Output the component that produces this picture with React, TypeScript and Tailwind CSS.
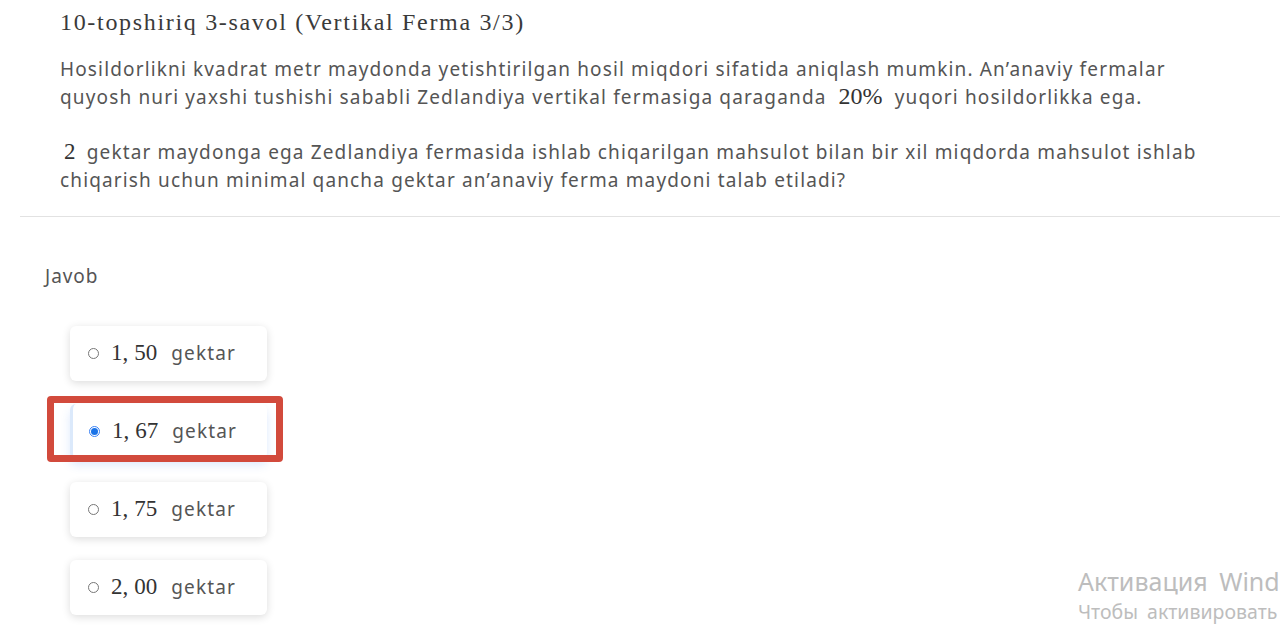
import React from "react";

const sans = "font-['Noto_Sans','Open_Sans',sans-serif]";
const serif = "font-['Liberation_Serif','DejaVu_Serif',serif]";

const OPTIONS = [
  { value: "1,50", selected: false },
  { value: "1,67", selected: true },
  { value: "1,75", selected: false },
  { value: "2,00", selected: false },
];

function Radio({ on }: { on: boolean }) {
  if (on) {
    return (
      <span className="w-[11px] h-[11px] rounded-full border border-[#3b82f6] bg-white flex items-center justify-center flex-shrink-0">
        <span className="w-[7px] h-[7px] rounded-full bg-[#1a73e8]" />
      </span>
    );
  }
  return <span className="w-[11px] h-[11px] rounded-full border border-[#777] bg-white flex-shrink-0" />;
}

function Option({ value, selected }: { value: string; selected: boolean }) {
  const [a, b] = value.split(",");
  return (
    <div className="relative">
      <div
        className={`w-[197px] h-[55px] rounded-md bg-white flex items-center gap-[12px] ${
          selected
            ? "border-l-[3px] border-[#dbe9fb] shadow-[0_6px_10px_rgba(66,133,244,0.18)] pl-[16px]"
            : "shadow-[0_2px_8px_rgba(0,0,0,0.14)] pl-[18px]"
        }`}
      >
        <Radio on={selected} />
        <span className="flex items-baseline">
          <span className={`${serif} text-[23px] text-[#333]`}>
            {a},<span className="ml-[6px]">{b}</span>
          </span>
          <span className={`${sans} text-[19px] tracking-[0.06em] text-[#555] ml-[14px]`}>gektar</span>
        </span>
      </div>
      {selected && (
        <div className="absolute left-[-23px] top-[-8px] w-[236px] h-[66px] border-[7px] border-[#d24a3c] rounded-[4px] pointer-events-none" />
      )}
    </div>
  );
}

export default function App() {
  return (
    <div className={`relative w-[1280px] h-[631px] bg-white overflow-hidden ${sans}`}>
      <div className="ml-[20px] border-b border-[#e2e2e2] pl-[40px] pt-[8px] pb-[22px]">
        <h1 className={`${serif} text-[24px] tracking-[0.07em] text-[#3a3a3a] leading-[28px]`}>
          10-topshiriq 3-savol (Vertikal Ferma 3/3)
        </h1>
        <p className="mt-[20px] text-[19px] tracking-[0.06em] leading-[27px] text-[#555] whitespace-nowrap">
          Hosildorlikni kvadrat metr maydonda yetishtirilgan hosil miqdori sifatida aniqlash mumkin. An’anaviy fermalar
          <br />
          quyosh nuri yaxshi tushishi sababli Zedlandiya vertikal fermasiga qaraganda{" "}
          <span className={`${serif} text-[24px] tracking-normal text-[#333] mx-[6px]`}>20%</span> yuqori hosildorlikka ega.
        </p>
        <p className="mt-[27px] text-[19px] tracking-[0.06em] leading-[28px] text-[#555] whitespace-nowrap">
          <span className={`${serif} text-[23px] text-[#333] mx-[4px]`}>2</span> gektar maydonga ega Zedlandiya
          fermasida ishlab chiqarilgan mahsulot bilan bir xil miqdorda mahsulot ishlab
          <br />
          chiqarish uchun minimal qancha gektar an’anaviy ferma maydoni talab etiladi?
        </p>
      </div>

      <div className="pl-[45px] pt-[45px]">
        <div className="text-[19px] tracking-[0.05em] text-[#555]">Javob</div>
        <div className="mt-[35px] ml-[25px] flex flex-col gap-[23px]">
          {OPTIONS.map((o) => (
            <Option key={o.value} value={o.value} selected={o.selected} />
          ))}
        </div>
      </div>

      <div className="absolute left-[1078px] top-[565px] whitespace-nowrap font-['Noto_Sans','Open_Sans',sans-serif] text-[#bdbdbd]">
        <div className="text-[25px] leading-[32px] [word-spacing:5px]">Активация Windows</div>
        <div className="text-[19.5px] leading-[24px] mt-[3px] [word-spacing:4px]">Чтобы активировать Windows, перейдите в раздел «Параметры».</div>
      </div>
    </div>
  );
}
